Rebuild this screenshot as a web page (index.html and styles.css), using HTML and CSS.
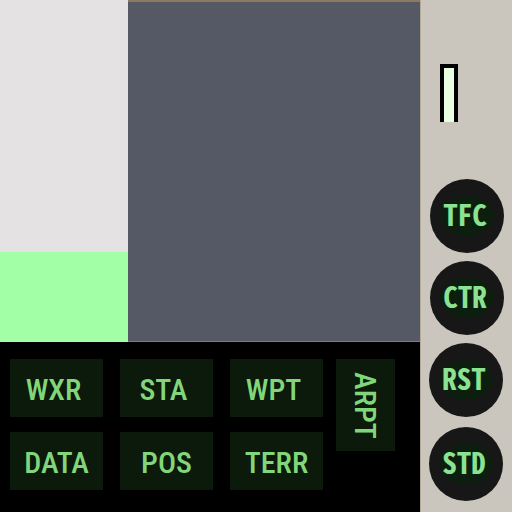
FILE: index.html
```html
<!DOCTYPE html>
<html lang="en">
<head>
<meta charset="utf-8">
<title>Navigation display</title>
<link rel="stylesheet" href="styles.css">
</head>
<body>
<div class="panel">
  <main class="display">
    <section class="screens">
      <div class="level"><div class="level-fill"></div></div>
      <div class="map"></div>
    </section>
    <nav class="keys">
      <div class="key-grid">
        <button class="key key-upper">WXR</button>
        <button class="key key-upper">STA</button>
        <button class="key key-upper">WPT</button>
        <button class="key">DATA</button>
        <button class="key">POS</button>
        <button class="key">TERR</button>
      </div>
      <button class="key key-tall">ARPT</button>
    </nav>
  </main>
  <aside class="bezel">
    <div class="gauge"></div>
    <div class="knobs">
      <button class="knob">TFC</button>
      <button class="knob">CTR</button>
    </div>
    <div class="knobs knobs-lower">
      <button class="knob">RST</button>
      <button class="knob">STD</button>
    </div>
  </aside>
</div>
</body>
</html>
```
FILE: styles.css
```css
* {
  box-sizing: border-box;
}

body {
  margin: 0;
  background: #000;
}

button {
  border: 0;
  padding: 0;
  cursor: pointer;
}

.panel {
  display: grid;
  grid-template-columns: 1fr 92px;
  min-height: 100vh;
}

.display {
  display: grid;
  grid-template-rows: 1fr auto;
}

.screens {
  display: grid;
  grid-template-columns: 128px 1fr;
}

.level {
  display: flex;
  flex-direction: column;
  justify-content: flex-end;
  background: #e4e2e3;
}

.level-fill {
  height: 90px;
  background: #a2ffa5;
}

.map {
  background: #555965;
  border-top: 2px solid #8d7b5d;
  border-bottom: 1px solid #8d7b5d;
}

.keys {
  display: flex;
  align-items: flex-start;
  gap: 13px;
  padding: 17px 10px 22px;
  background: #000;
}

.key-grid {
  display: grid;
  grid-template-columns: repeat(3, 93px);
  gap: 15px 17px;
}

.key {
  height: 58px;
  padding-top: 4px;
  background: #0b1a0a;
  color: #82d67a;
  font: 500 30px/54px "Roboto Condensed", "Noto Sans CJK SC", sans-serif;
}

.key-upper {
  padding-right: 6px;
}

.key-tall {
  width: 59px;
  height: 92px;
  padding: 0 2px 0 0;
  writing-mode: vertical-rl;
  line-height: 56px;
}

.bezel {
  display: flex;
  flex-direction: column;
  padding: 64px 8px 11px 8px;
  background: #cac5bd;
  border-left: 1px solid #b5aa99;
}

.gauge {
  width: 18px;
  height: 58px;
  margin: 0 0 57px 11px;
  background: #e8ffe2;
  border: 4px solid #000;
  border-bottom: 0;
}

.knobs {
  display: flex;
  flex-direction: column;
  align-items: flex-end;
  gap: 8px;
}

.knobs-lower {
  gap: 10px;
  align-items: flex-start;
  margin-top: 8px;
}

.knob {
  width: 74px;
  height: 74px;
  padding: 0 4px 6px 0;
  border-radius: 50%;
  background: radial-gradient(ellipse 28px 21px, #0c1e0d 90%, #171717 100%);
  color: #8be293;
  font: bold 29px/68px "Noto Sans Mono CJK SC", "DejaVu Sans Mono", monospace;
}
```
